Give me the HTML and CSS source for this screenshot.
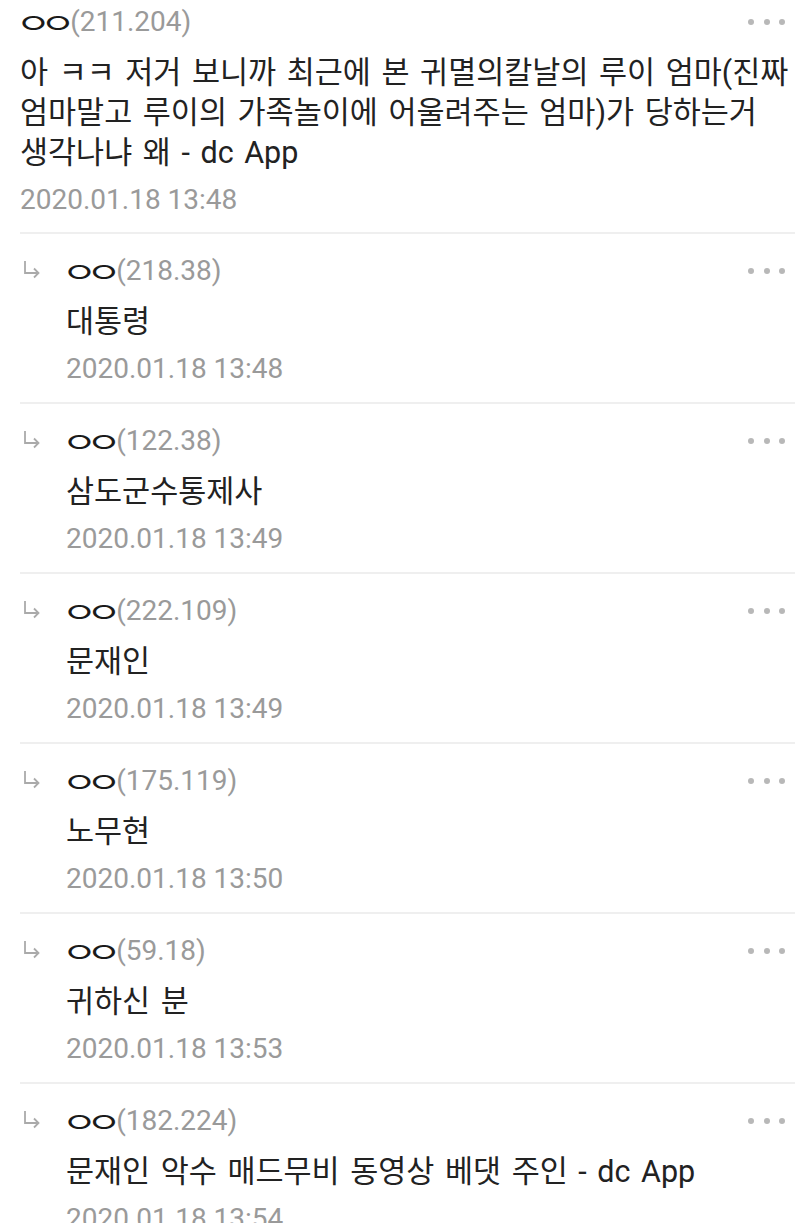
FILE: index.html
```html
<!DOCTYPE html>
<html lang="ko">
<head>
<meta charset="utf-8">
<link rel="stylesheet" href="styles.css">
</head>
<body>
<div class="list">
  <div class="comment top">
    <div class="body">
      <div class="head">
        <div class="name"><span class="nick">ㅇㅇ</span><span class="ip">(211.204)</span></div>
        <div class="more"><i></i><i></i><i></i></div>
      </div>
      <div class="text">아 ㅋㅋ 저거 보니까 최근에 본 귀멸의칼날의 루이 엄마(진짜 엄마말고 루이의 가족놀이에 어울려주는 엄마)가 당하는거 생각나냐 왜 - dc App</div>
      <div class="date">2020.01.18 13:48</div>
    </div>
  </div>

  <div class="comment reply">
    <div class="arrow"><svg width="18" height="20" viewBox="0 0 18 20"><path d="M3 1 V13 H16 M12 8.5 L16.5 13 L12 17.5" fill="none" stroke="#aaa" stroke-width="1.8"/></svg></div>
    <div class="body">
      <div class="head">
        <div class="name"><span class="nick">ㅇㅇ</span><span class="ip">(218.38)</span></div>
        <div class="more"><i></i><i></i><i></i></div>
      </div>
      <div class="text">대통령</div>
      <div class="date">2020.01.18 13:48</div>
    </div>
  </div>

  <div class="comment reply">
    <div class="arrow"><svg width="18" height="20" viewBox="0 0 18 20"><path d="M3 1 V13 H16 M12 8.5 L16.5 13 L12 17.5" fill="none" stroke="#aaa" stroke-width="1.8"/></svg></div>
    <div class="body">
      <div class="head">
        <div class="name"><span class="nick">ㅇㅇ</span><span class="ip">(122.38)</span></div>
        <div class="more"><i></i><i></i><i></i></div>
      </div>
      <div class="text">삼도군수통제사</div>
      <div class="date">2020.01.18 13:49</div>
    </div>
  </div>

  <div class="comment reply">
    <div class="arrow"><svg width="18" height="20" viewBox="0 0 18 20"><path d="M3 1 V13 H16 M12 8.5 L16.5 13 L12 17.5" fill="none" stroke="#aaa" stroke-width="1.8"/></svg></div>
    <div class="body">
      <div class="head">
        <div class="name"><span class="nick">ㅇㅇ</span><span class="ip">(222.109)</span></div>
        <div class="more"><i></i><i></i><i></i></div>
      </div>
      <div class="text">문재인</div>
      <div class="date">2020.01.18 13:49</div>
    </div>
  </div>

  <div class="comment reply">
    <div class="arrow"><svg width="18" height="20" viewBox="0 0 18 20"><path d="M3 1 V13 H16 M12 8.5 L16.5 13 L12 17.5" fill="none" stroke="#aaa" stroke-width="1.8"/></svg></div>
    <div class="body">
      <div class="head">
        <div class="name"><span class="nick">ㅇㅇ</span><span class="ip">(175.119)</span></div>
        <div class="more"><i></i><i></i><i></i></div>
      </div>
      <div class="text">노무현</div>
      <div class="date">2020.01.18 13:50</div>
    </div>
  </div>

  <div class="comment reply">
    <div class="arrow"><svg width="18" height="20" viewBox="0 0 18 20"><path d="M3 1 V13 H16 M12 8.5 L16.5 13 L12 17.5" fill="none" stroke="#aaa" stroke-width="1.8"/></svg></div>
    <div class="body">
      <div class="head">
        <div class="name"><span class="nick">ㅇㅇ</span><span class="ip">(59.18)</span></div>
        <div class="more"><i></i><i></i><i></i></div>
      </div>
      <div class="text">귀하신 분</div>
      <div class="date">2020.01.18 13:53</div>
    </div>
  </div>

  <div class="comment reply">
    <div class="arrow"><svg width="18" height="20" viewBox="0 0 18 20"><path d="M3 1 V13 H16 M12 8.5 L16.5 13 L12 17.5" fill="none" stroke="#aaa" stroke-width="1.8"/></svg></div>
    <div class="body">
      <div class="head">
        <div class="name"><span class="nick">ㅇㅇ</span><span class="ip">(182.224)</span></div>
        <div class="more"><i></i><i></i><i></i></div>
      </div>
      <div class="text">문재인 악수 매드무비 동영상 베댓 주인 - dc App</div>
      <div class="date">2020.01.18 13:54</div>
    </div>
  </div>
</div>
</body>
</html>
```

FILE: styles.css
```css
html, body {
  margin: 0;
  padding: 0;
  background: #fff;
}
body {
  font-family: "Roboto", "Noto Sans CJK KR", sans-serif;
  font-size: 28px;
  color: #222;
  overflow: hidden;
  height: 1223px;
}
.list {
  padding: 0 5px 0 20px;
}
.comment {
  display: flex;
  border-bottom: 2px solid #efefef;
}
.comment.top {
  padding: 2px 0 12px 0;
}
.comment.reply {
  padding: 17px 0 13px 0;
}
.arrow {
  width: 46px;
  flex: none;
  padding-top: 9px;
  padding-left: 2px;
  box-sizing: border-box;
}
.arrow svg {
  display: block;
}
.body {
  flex: 1;
  min-width: 0;
}
.head {
  display: flex;
  justify-content: space-between;
  align-items: center;
  height: 40px;
}
.name {
  display: flex;
  align-items: center;
  height: 40px;
  line-height: 40px;
  color: #222;
}
.nick {
  display: inline-block;
  font-size: 39px;
  font-weight: 400;
  letter-spacing: -11.3px;
  line-height: 40px;
  color: #1a1a1a;
  transform: translate(-4.5px, 2px) scaleY(0.74);
  margin-right: 1px;
}
.ip {
  color: #9a9a9a;
}
.more {
  display: flex;
  gap: 9.5px;
  padding-right: 10px;
}
.more i {
  display: block;
  width: 6px;
  height: 6px;
  border-radius: 50%;
  background: #b8b8b8;
}
.text {
  margin-top: 11px;
  font-size: 30.5px;
  word-spacing: 3px;
  line-height: 40px;
  color: #222;
}
.date {
  margin-top: 7px;
  line-height: 40px;
  color: #9a9a9a;
}
```
